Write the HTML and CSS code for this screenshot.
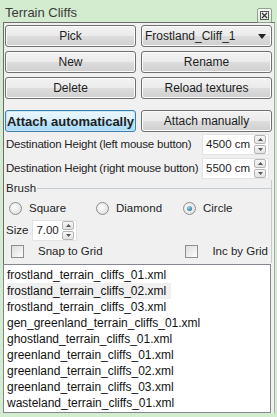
FILE: index.html
```html
<!DOCTYPE html>
<html>
<head>
  <title>Terrain Cliffs</title>
  <link rel="stylesheet" href="styles.css">
</head>
<body>
  <div class="window">
    <div class="titlebar">
      <span class="title">Terrain Cliffs</span>
      <div class="close">
        <svg width="9" height="9" viewBox="0 0 9 9">
          <rect x="0.5" y="0.5" width="8" height="8" fill="none" stroke="#555" stroke-width="1"/>
          <path d="M2 2 L7 7 M7 2 L2 7" stroke="#333" stroke-width="1.2"/>
        </svg>
      </div>
    </div>

    <div class="panel">
      <div class="btn-grid">
        <button class="btn">Pick</button>
        <div class="btn combo">
          <span>Frostland_Cliff_1</span>
          <svg width="8" height="5" viewBox="0 0 8 5"><path d="M0 0 L8 0 L4 5 Z" fill="#222"/></svg>
        </div>
        <button class="btn">New</button>
        <button class="btn">Rename</button>
        <button class="btn">Delete</button>
        <button class="btn">Reload textures</button>
      </div>

      <div class="btn-grid attach">
        <button class="btn active">Attach automatically</button>
        <button class="btn">Attach manually</button>
      </div>

      <div class="field-row">
        <span>Destination Height (left mouse button)</span>
        <div class="spin height">
          <span class="spin-value">4500 cm</span>
          <div class="spin-btns">
            <div class="spin-btn"><svg width="5" height="3" viewBox="0 0 5 3"><path d="M0 3 L5 3 L2.5 0 Z" fill="#555"/></svg></div>
            <div class="spin-btn"><svg width="5" height="3" viewBox="0 0 5 3"><path d="M0 0 L5 0 L2.5 3 Z" fill="#555"/></svg></div>
          </div>
        </div>
      </div>
      <div class="field-row">
        <span>Destination Height (right mouse button)</span>
        <div class="spin height">
          <span class="spin-value">5500 cm</span>
          <div class="spin-btns">
            <div class="spin-btn"><svg width="5" height="3" viewBox="0 0 5 3"><path d="M0 3 L5 3 L2.5 0 Z" fill="#555"/></svg></div>
            <div class="spin-btn"><svg width="5" height="3" viewBox="0 0 5 3"><path d="M0 0 L5 0 L2.5 3 Z" fill="#555"/></svg></div>
          </div>
        </div>
      </div>

      <div class="group">
        <div class="group-title"><span>Brush</span><span class="group-line"></span></div>
        <div class="radios">
          <label class="radio"><span class="dot"></span>Square</label>
          <label class="radio"><span class="dot"></span>Diamond</label>
          <label class="radio"><span class="dot checked"></span>Circle</label>
        </div>
        <div class="size-row">
          <span>Size</span>
          <div class="spin size">
            <span class="spin-value">7.00</span>
            <div class="spin-btns">
              <div class="spin-btn"><svg width="5" height="3" viewBox="0 0 5 3"><path d="M0 3 L5 3 L2.5 0 Z" fill="#555"/></svg></div>
              <div class="spin-btn"><svg width="5" height="3" viewBox="0 0 5 3"><path d="M0 0 L5 0 L2.5 3 Z" fill="#555"/></svg></div>
            </div>
          </div>
        </div>
        <div class="checks">
          <label class="check"><span class="box"></span>Snap to Grid</label>
          <label class="check"><span class="box"></span>Inc by Grid</label>
        </div>
      </div>

      <ul class="file-list">
        <li>frostland_terrain_cliffs_01.xml</li>
        <li class="hover">frostland_terrain_cliffs_02.xml</li>
        <li>frostland_terrain_cliffs_03.xml</li>
        <li>gen_greenland_terrain_cliffs_01.xml</li>
        <li>ghostland_terrain_cliffs_01.xml</li>
        <li>greenland_terrain_cliffs_01.xml</li>
        <li>greenland_terrain_cliffs_02.xml</li>
        <li>greenland_terrain_cliffs_03.xml</li>
        <li>wasteland_terrain_cliffs_01.xml</li>
      </ul>
    </div>
  </div>
</body>
</html>
```

FILE: styles.css
```css
body {
  margin: 0;
  background-color: #d3ebcf;
  font-family: "Liberation Sans", Arial, sans-serif;
  font-size: 11.5px;
  color: #1e1e1e;
}

.window {
  width: 277px;
  height: 417px;
}

.titlebar {
  height: 22px;
  display: flex;
  justify-content: space-between;
  align-items: flex-start;
  padding: 0 5px 0 5px;
}

.title {
  font-size: 13px;
  color: #3b3b3b;
  margin-top: 5px;
}

.close {
  width: 13px;
  height: 13px;
  margin-top: 8px;
  border: 1px solid #8fa58b;
  border-radius: 2px;
  background: linear-gradient(#f4faf3, #dcebd9);
  display: flex;
  align-items: center;
  justify-content: center;
}

.panel {
  margin-left: 3px;
  width: 268px;
  border: 1px solid #6d6d6d;
  border-right-color: #a9a9a9;
  border-bottom: none;
  background-color: #f0f0f0;
  padding: 1px 1px 0 1px;
}

.btn-grid {
  display: grid;
  grid-template-columns: 1fr 1fr;
  gap: 4px 5px;
  margin-top: 1px;
  padding-right: 1px;
}

.btn-grid.attach {
  margin-top: 11px;
}

.btn {
  height: 22px;
  border: 1px solid #707070;
  border-radius: 3px;
  background: linear-gradient(#f2f2f2 0%, #ebebeb 48%, #dddddd 52%, #cfcfcf 100%);
  box-shadow: inset 0 0 0 1px #fbfbfb;
  font-family: inherit;
  font-size: 12px;
  color: #1e1e1e;
  padding: 0;
}

.btn.active {
  border-color: #3c7fb1;
  background: linear-gradient(#eaf6fd 0%, #d9f0fc 48%, #bee6fd 52%, #a7d9f5 100%);
  box-shadow: inset 0 0 0 1px #c8e8fa;
  font-weight: bold;
  font-size: 13px;
}

.combo {
  box-sizing: border-box;
  display: flex;
  align-items: center;
  justify-content: space-between;
  padding: 0 5px 0 3px;
}

.field-row {
  display: flex;
  justify-content: space-between;
  align-items: center;
  padding: 0 4px 0 1px;
  height: 24px;
  white-space: nowrap;
  letter-spacing: -0.2px;
}

.spin {
  display: flex;
  align-items: center;
  justify-content: space-between;
  background: #ffffff;
  border: 1px solid #e3e3e3;
  box-sizing: border-box;
  height: 21px;
  padding: 0 2px 0 3px;
  letter-spacing: 0;
}

.spin.height {
  width: 67px;
}

.spin.size {
  width: 45px;
}

.spin-btns {
  display: flex;
  flex-direction: column;
  gap: 1px;
}

.spin-btn {
  width: 10px;
  height: 7px;
  border: 1px solid #b5b5b5;
  border-radius: 2px;
  background: linear-gradient(#f7f7f7, #e2e2e2);
  display: flex;
  align-items: center;
  justify-content: center;
}

.group {
  border-right: 1px solid #c4cbd0;
  margin-right: 1px;
  padding-bottom: 1px;
}

.group-title {
  display: flex;
  align-items: center;
  padding-left: 1px;
  height: 16px;
}

.group-line {
  flex: 1;
  height: 1px;
  background: #c4cbd0;
  margin-left: 1px;
  margin-right: -1px;
}

.radios {
  display: flex;
  height: 24px;
  align-items: center;
  padding-left: 4px;
}

.radio {
  display: flex;
  align-items: center;
  width: 87px;
}

.dot {
  width: 11px;
  height: 11px;
  border: 1px solid #8e8f8f;
  border-radius: 50%;
  background: radial-gradient(circle at 40% 40%, #ffffff, #d6d6d6);
  margin-right: 7px;
  position: relative;
}

.dot.checked::after {
  content: "";
  position: absolute;
  left: 3px;
  top: 3px;
  width: 5px;
  height: 5px;
  border-radius: 50%;
  background: radial-gradient(circle at 40% 35%, #8fd2f5, #1a5d84);
}

.size-row {
  display: flex;
  align-items: center;
  height: 20px;
  padding-left: 1px;
  gap: 4px;
}

.checks {
  display: flex;
  justify-content: space-between;
  align-items: center;
  height: 22px;
  padding: 0 3px 0 6px;
}

.check {
  display: flex;
  align-items: center;
}

.box {
  width: 11px;
  height: 11px;
  border: 1px solid #8e8f8f;
  background: linear-gradient(135deg, #dcdcdc, #fcfcfc);
  margin-right: 14px;
}

.file-list {
  list-style: none;
  margin: 1px 0 0 -2px;
  padding: 2px 0 1px 3px;
  background: #ffffff;
  border: 1px solid #828790;
  width: 263px;
}

.file-list li {
  height: 16px;
  line-height: 16px;
  font-size: 12px;
  color: #111;
}

.file-list li.hover {
  background: #f0f0f0;
  width: 164px;
}
```
